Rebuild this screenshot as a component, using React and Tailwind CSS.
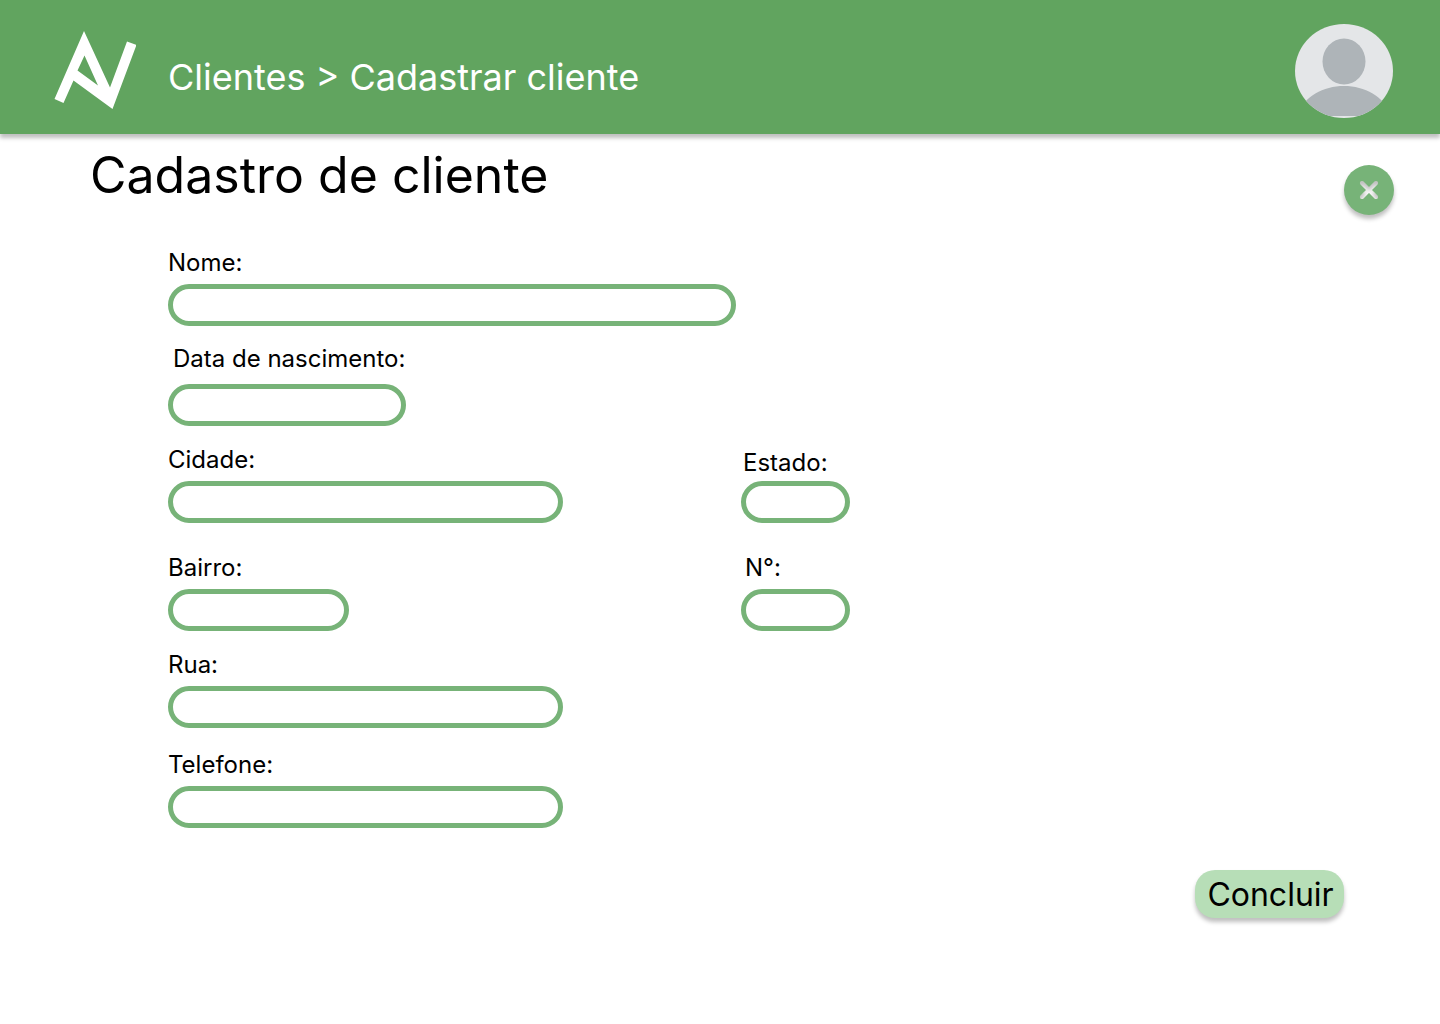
function Logo() {
  return (
    <svg viewBox="0 0 82 78" className="h-[78px] w-[82px] shrink-0" fill="white" aria-hidden="true">
      <path
        fillRule="evenodd"
        d="M0.500 68 30 0 56 56.500 73 10.500 82.500 14 58.500 78 19.500 49.500 9.500 72ZM30.500 24.500 44 54.500 23.500 39.500Z"
      />
    </svg>
  );
}

function Avatar() {
  return (
    <svg viewBox="0 0 98 94" className="h-[94px] w-[98px]" aria-hidden="true">
      <defs>
        <clipPath id="avatar-clip">
          <ellipse cx="49" cy="47" rx="49" ry="47" />
        </clipPath>
      </defs>
      <g clipPath="url(#avatar-clip)">
        <rect width="98" height="94" fill="#e4e6e8" />
        <ellipse cx="49" cy="37.500" rx="21.500" ry="23" fill="#aeb4b8" />
        <path d="M0 92C10 72 28 62 49 62s39 10 49 30Z" fill="#aeb4b8" />
      </g>
    </svg>
  );
}

function CloseIcon() {
  return (
    <svg viewBox="0 0 20 20" className="h-5 w-5" aria-hidden="true">
      <defs>
        <filter
          id="inner-shade"
          filterUnits="userSpaceOnUse"
          x="0"
          y="0"
          width="20"
          height="26"
          colorInterpolationFilters="sRGB"
        >
          <feOffset in="SourceAlpha" dy="4" />
          <feGaussianBlur stdDeviation="2" />
          <feComposite in2="SourceAlpha" operator="arithmetic" k2="-1" k3="1" result="edge" />
          <feColorMatrix in="edge" values="0 0 0 0 0  0 0 0 0 0  0 0 0 0 0  0 0 0 .25 0" />
          <feBlend in2="SourceGraphic" />
        </filter>
      </defs>
      <path
        d="M3 3 17 17M17 3 3 17"
        stroke="#fff"
        strokeWidth="4"
        strokeLinecap="round"
        filter="url(#inner-shade)"
      />
    </svg>
  );
}

function Field({ id, label, width, gap = "gap-1.5", inset = "", type = "text" }) {
  return (
    <div className={`flex flex-col justify-end ${gap}`}>
      <label htmlFor={id} className={`text-2xl leading-[30px] ${inset}`}>
        {label}
      </label>
      <input
        id={id}
        name={id}
        type={type}
        className={`h-[42px] max-w-full rounded-full border-5 border-[#77b378] bg-white px-4 text-lg outline-none ${width}`}
      />
    </div>
  );
}

export default function App() {
  return (
    <div className="min-h-screen bg-white pb-16 font-['Inter',sans-serif] text-black">
      <header className="flex items-center justify-between bg-[#61a45f] pt-6 pr-[47px] pb-4 pl-[54px] shadow-[0_4px_4px_rgba(0,0,0,0.25)]">
        <div className="flex items-center gap-8">
          <a href="#inicio" aria-label="Início" className="pb-0.5">
            <Logo />
          </a>
          <nav aria-label="Caminho" className="pt-3 text-4xl text-white">
            <a href="#clientes">Clientes</a> &gt; <span aria-current="page">Cadastrar cliente</span>
          </nav>
        </div>
        <button type="button" aria-label="Perfil">
          <Avatar />
        </button>
      </header>

      <main>
        <div className="flex items-start justify-between pt-[11px] pr-[46px] pl-[90px]">
          <h1 className="text-[50px] leading-[60px]">Cadastro de cliente</h1>
          <button
            type="button"
            aria-label="Fechar"
            className="mt-5 flex h-[50px] w-[50px] items-center justify-center rounded-full bg-[#77b378] shadow-[0_4px_4px_rgba(0,0,0,0.25)]"
          >
            <CloseIcon />
          </button>
        </div>

        <form className="pl-[168px]">
          <div className="mt-[33px]">
            <Field id="nome" label="Nome:" width="w-[568px]" />
          </div>
          <div className="mt-[18px]">
            <Field id="nascimento" label="Data de nascimento:" width="w-[238px]" gap="gap-2.5" inset="pl-[5px]" />
          </div>
          <div className="mt-[19px] grid grid-cols-[573px_1fr]">
            <Field id="cidade" label="Cidade:" width="w-[395px]" />
            <Field id="estado" label="Estado:" width="w-[109px]" gap="gap-[3px]" inset="pl-0.5" />
          </div>
          <div className="mt-[30px] grid grid-cols-[573px_1fr]">
            <Field id="bairro" label="Bairro:" width="w-[181px]" />
            <Field id="numero" label="N°:" width="w-[109px]" inset="pl-1" />
          </div>
          <div className="mt-[19px]">
            <Field id="rua" label="Rua:" width="w-[395px]" />
          </div>
          <div className="mt-[22px]">
            <Field id="telefone" label="Telefone:" width="w-[395px]" type="tel" />
          </div>
          <div className="mt-[42px] flex justify-end pr-24">
            <button
              type="button"
              className="h-12 w-[149px] rounded-[20px] bg-[#b7deb7] pt-0.5 pl-0.5 text-[32px] leading-10 shadow-[0_4px_4px_rgba(0,0,0,0.25)]"
            >
              Concluir
            </button>
          </div>
        </form>
      </main>
    </div>
  );
}
